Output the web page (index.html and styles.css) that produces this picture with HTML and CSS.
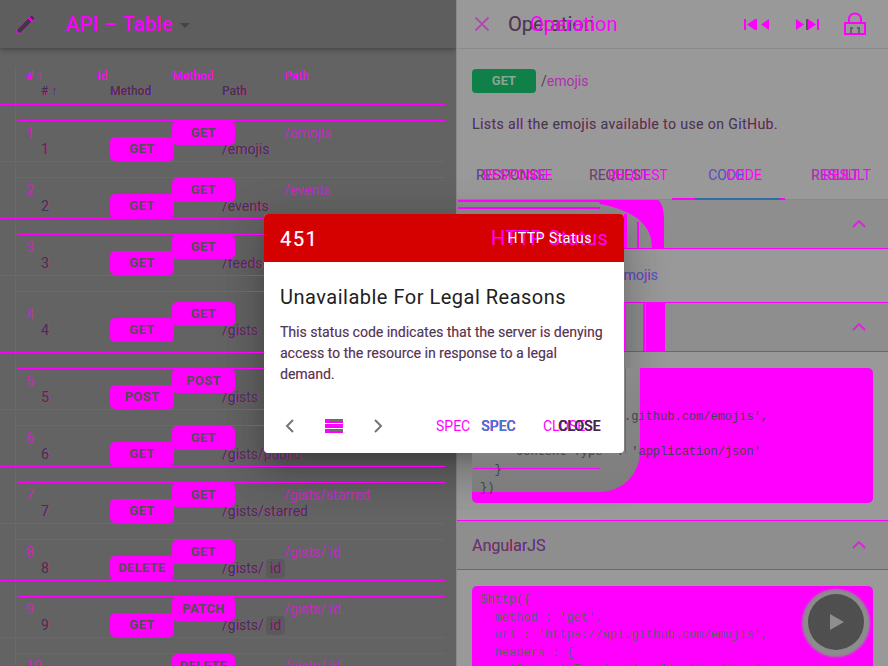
FILE: index.html
```html
<!DOCTYPE html>
<html lang="en">
<head>
    <meta charset="UTF-8">
    <meta name="viewport" content="width=device-width, initial-scale=1.0">
    <title>API Table</title>
    <link rel="stylesheet" href="styles.css">
</head>
<body>
    <div class="app">
        <!-- Left side: list of operations -->
        <div class="list-panel">
            <div class="list-head">
                <svg class="edit-icon" width="24" height="24" viewBox="0 0 24 24"><path d="M3 17.25V21h3.75L17.81 9.94l-3.75-3.75L3 17.25zM20.71 7.04c.39-.39.39-1.02 0-1.41l-2.34-2.34c-.39-.39-1.02-.39-1.41 0l-1.83 1.83 3.75 3.75 1.83-1.83z"/></svg>
                <span class="list-title">API – Table</span>
                <span class="caret"></span>
            </div>

            <div class="tables">
                <div class="real-table">
                    <div class="real-row real-header"><span>#&nbsp;↑</span><span>Method</span><span>Path</span></div>
                    <div class="real-row"><span>1</span><span class="pill">GET</span><span>/emojis</span></div>
                    <div class="real-row"><span>2</span><span class="pill">GET</span><span>/events</span></div>
                    <div class="real-row"><span>3</span><span class="pill">GET</span><span>/feeds</span></div>
                    <div class="real-row tall"><span>4</span><span class="pill">GET</span><span>/gists</span></div>
                    <div class="real-row"><span>5</span><span class="pill">POST</span><span>/gists</span></div>
                    <div class="real-row"><span>6</span><span class="pill">GET</span><span>/gists/public</span></div>
                    <div class="real-row"><span>7</span><span class="pill">GET</span><span>/gists/starred</span></div>
                    <div class="real-row"><span>8</span><span class="pill">DELETE</span><span>/gists/<i class="chip">id</i></span></div>
                    <div class="real-row"><span>9</span><span class="pill">GET</span><span>/gists/<i class="chip">id</i></span></div>
                </div>

                <div class="ghost-table">
                    <div class="ghost-row ghost-header"><span>#&nbsp;↑</span><span>Id</span><span>Method</span><span>Path</span></div>
                    <div class="ghost-row"><span>1</span><span></span><span class="pill">GET</span><span>/emojis</span></div>
                    <div class="ghost-row"><span>2</span><span></span><span class="pill">GET</span><span>/events</span></div>
                    <div class="ghost-row"><span>3</span><span></span><span class="pill">GET</span><span>/feeds</span></div>
                    <div class="ghost-row tall"><span>4</span><span></span><span class="pill">GET</span><span>/gists</span></div>
                    <div class="ghost-row"><span>5</span><span></span><span class="pill">POST</span><span>/gists</span></div>
                    <div class="ghost-row"><span>6</span><span></span><span class="pill">GET</span><span>/gists/public</span></div>
                    <div class="ghost-row"><span>7</span><span></span><span class="pill">GET</span><span>/gists/starred</span></div>
                    <div class="ghost-row"><span>8</span><span></span><span class="pill">GET</span><span>/gists/ id</span></div>
                    <div class="ghost-row"><span>9</span><span></span><span class="pill">PATCH</span><span>/gists/ id</span></div>
                    <div class="ghost-row"><span>10</span><span></span><span class="pill">DELETE</span><span>/gists/ id</span></div>
                </div>
            </div>
        </div>

        <!-- Right side: operation details -->
        <div class="detail-panel">
            <div class="detail-head">
                <svg class="close-icon" width="24" height="24" viewBox="0 0 24 24"><path d="M5.5 5.5l13 13M18.5 5.5l-13 13"/></svg>
                <span class="detail-title">Operation</span>
                <span class="detail-title-ghost">Operation</span>
                <div class="head-icons">
                    <svg width="28" height="24" viewBox="0 0 28 24"><path class="fill-m" d="M1 7h2v11H1zM12 7h2v11h-2zM12 7L4 12.500 12 18zM26 7v11l-8-5.500z"/></svg>
                    <svg width="24" height="24" viewBox="0 0 24 24"><path class="fill-m" d="M1 7l8 5.500-8 5.500zM13 7l8 5.500-8 5.500zM22 7h2v11h-2z"/><path class="fill-d" d="M11 7h2v11h-2z"/></svg>
                    <svg width="24" height="24" viewBox="0 0 24 24"><path class="lock" d="M2 11h20v11H2zM6 11V7c0-3 2.500-5.500 6-5.500s6 2.500 6 5.500v4"/><path class="lock-bar" d="M8 22v-6h2M14 16h2v6"/></svg>
                </div>
            </div>

            <div class="operation">
                <div class="op-line">
                    <span class="op-method">GET</span>
                    <span class="op-path">/<b>emojis</b></span>
                </div>
                <p class="op-desc">Lists all the emojis available to use on GitHub.</p>
            </div>

            <div class="tabs">
                <div class="tab-row">
                    <span>RESPONSE</span><span>REQUEST</span><span class="active">CODE</span><span class="result">RESULT</span>
                </div>
                <div class="tab-row tab-ghost">
                    <span>RESPONSE</span><span>REQUEST</span><span>CODE</span><span>RESULT</span>
                </div>
                <div class="tab-line"></div>
            </div>

            <div class="section-head">
                <span>URL</span>
                <svg class="chevron" width="14" height="8" viewBox="0 0 14 8"><path d="M1 7l6-6 6 6"/></svg>
            </div>
            <div class="section-body url-body">
                <a class="url-link">https://api.github.com/emojis</a>
            </div>
            <div class="section-head">
                <span>jQuery</span>
                <svg class="chevron" width="14" height="8" viewBox="0 0 14 8"><path d="M1 7l6-6 6 6"/></svg>
            </div>
            <div class="section-body">
                <div class="code first-code">
                    <div class="code-hole"></div>
                    <div class="code-rule"></div>
<pre>$.ajax({
  method : 'get',
  url : 'https://api.github.com/emojis',
  headers : {
    'Content-Type' : 'application/json'
  }
})</pre>
                </div>
            </div>
            <div class="section-head">
                <span class="section-name">AngularJS</span>
                <svg class="chevron" width="14" height="8" viewBox="0 0 14 8"><path d="M1 7l6-6 6 6"/></svg>
            </div>
            <div class="section-body">
                <div class="code">
<pre>$http({
  method : 'get',
  url : 'https://api.github.com/emojis',
  headers : {
    'Content-Type' : 'application/json'
  }
})</pre>
                </div>
            </div>

            <!-- Stray patches next to the dialog, given in page coordinates -->
            <svg class="patches" width="431" height="666" viewBox="457 0 431 666">
                <rect x="458" y="200" width="200" height="2"/>
                <rect x="458" y="207" width="142" height="2"/>
                <path d="M598 200H658C662 203 664 210 664 220V248H652C652 228 640 212 600 204Z"/>
                <rect x="624" y="214" width="3" height="34"/>
                <rect x="637" y="222" width="2" height="26"/>
                <rect x="624" y="302" width="2" height="49"/>
                <rect x="643" y="302" width="2" height="49"/>
                <rect x="646" y="302" width="19" height="49"/>
                <rect x="625" y="368" width="1" height="85"/>
                <rect x="643" y="368" width="2" height="60"/>
            </svg>

            <button class="play">
                <svg width="14" height="16" viewBox="0 0 14 16"><path d="M0 0l14 8-14 8z"/></svg>
            </button>
        </div>

        <div class="dialog-shadow"></div>
        <div class="dialog">
            <div class="dialog-head">
                <span class="dialog-code">451</span>
                <span class="dialog-kind-ghost">HTTP Status</span>
                <span class="dialog-kind">HTTP Status</span>
            </div>
            <div class="dialog-body">
                <h2>Unavailable For Legal Reasons</h2>
                <p>This status code indicates that the server is denying access to the resource in response to a legal demand.</p>
            </div>
            <div class="dialog-actions">
                <svg class="nav" width="10" height="14" viewBox="0 0 10 14"><path d="M8 1L2 7l6 6"/></svg>
                <svg class="list-icon" width="18" height="15" viewBox="0 0 18 15"><path class="fill-m" d="M0 0h18v4H0zM0 5h18v4H0zM0 10h18v4H0z"/><path class="fill-g" d="M5 1h13v1H5zM5 6h13v1H5zM5 11h13v1H5z"/></svg>
                <svg class="nav" width="10" height="14" viewBox="0 0 10 14"><path d="M2 1l6 6-6 6"/></svg>
                <span class="action-ghost spec-ghost">SPEC</span>
                <span class="action spec">SPEC</span>
                <span class="action-ghost close-ghost">CLOSE</span>
                <span class="action close">CLOSE</span>
            </div>
        </div>
    </div>
</body>
</html>
```

FILE: styles.css
```css
* {
    box-sizing: border-box;
}

body {
    margin: 0;
    font-family: Roboto, "Liberation Sans", sans-serif;
    background: #999;
}

.app {
    position: relative;
    display: flex;
    width: 888px;
    height: 666px;
    overflow: hidden;
}

/* Left panel */

.list-panel {
    width: 456px;
    flex-shrink: 0;
    background: #636363;
}

.list-head {
    position: relative;
    display: flex;
    align-items: center;
    height: 48px;
    padding-left: 14px;
    background: #5e5e5e;
    box-shadow: 0 2px 5px rgba(0, 0, 0, 0.3);
}

.edit-icon {
    fill: #3c3c3c;
    stroke: #f0f;
    stroke-width: 1;
}

.list-title {
    margin-left: 28px;
    font-size: 20px;
    font-weight: 500;
    letter-spacing: 0.4px;
    color: #f0f;
    text-shadow: 1px 0 #555;
}

.caret {
    margin-left: 7px;
    margin-top: 2px;
    border-left: 5px solid transparent;
    border-right: 5px solid transparent;
    border-top: 5px solid #444;
}

.tables {
    position: relative;
    z-index: 4;
}

.pill {
    display: block;
    height: 24px;
    line-height: 24px;
    border-radius: 5px;
    background: #f0f;
    color: #505050;
    font-size: 13px;
    font-weight: 700;
    text-align: center;
    letter-spacing: 0.3px;
}

.real-row {
    display: grid;
    grid-template-columns: 69px 112px 1fr;
    align-items: end;
    height: 57px;
    margin-right: 11px;
    padding-left: 41px;
    border-bottom: 1px solid #f0f;
    font-size: 14px;
    line-height: 24px;
    color: #3a3a3a;
    text-shadow: 0.5px 0 rgba(255, 0, 255, 0.7);
}

.real-row .pill {
    width: 64px;
    text-shadow: none;
}

.real-header {
    font-size: 12px;
    font-weight: 500;
    padding-bottom: 1px;
}

.real-row.tall {
    height: 77px;
    padding-bottom: 10px;
}

.chip {
    display: inline-block;
    height: 19px;
    line-height: 19px;
    margin-left: 2px;
    padding: 0 4px;
    border-radius: 4px;
    background: #5a5a5a;
    font-style: normal;
}

.ghost-table {
    position: absolute;
    left: 15px;
    right: 11px;
    top: 19px;
    height: 600px;
    padding-left: 1px;
    border-left: 1px solid #f0f;
}

.ghost-row {
    display: grid;
    grid-template-columns: 71px 75px 112px 1fr;
    align-items: start;
    height: 57px;
    padding-left: 9px;
    border-bottom: 1px solid #f0f;
    font-size: 14px;
    line-height: 24px;
    color: rgba(255, 0, 255, 0.65);
}

.ghost-row .pill {
    width: 63px;
}

.ghost-header {
    height: 54px;
    font-size: 12px;
    font-weight: 500;
    line-height: 18px;
    color: #f0f;
}

.ghost-row.tall {
    height: 77px;
    padding-top: 10px;
}

/* Right panel */

.detail-panel {
    position: relative;
    flex: 1;
    border-left: 1px solid #888;
    background: #999;
}

.detail-head {
    position: relative;
    display: flex;
    align-items: center;
    height: 49px;
    padding-left: 13px;
    border-bottom: 1px solid #8a8a8a;
}

.close-icon {
    fill: none;
    stroke: #b04ab0;
    stroke-width: 1.800;
}

.detail-title {
    margin-left: 14px;
    font-size: 20px;
    color: #3f3f3f;
    text-shadow: 0.5px 0 rgba(255, 0, 255, 0.5);
}

.detail-title-ghost {
    position: absolute;
    left: 73px;
    top: 12px;
    font-size: 20px;
    color: #f0f;
    letter-spacing: 0.1px;
}

.head-icons {
    position: absolute;
    top: 12px;
    left: 286px;
    display: flex;
    gap: 24px;
}

.fill-m {
    fill: #f0f;
}

.fill-d {
    fill: #555;
}

.fill-g {
    fill: #757575;
}

.lock,
.lock-bar {
    fill: none;
    stroke: #f0f;
    stroke-width: 2;
}

.lock-bar {
    stroke: #666;
}

.operation {
    padding: 20px 15px 0;
    height: 101px;
}

.op-line {
    display: flex;
    align-items: center;
}

.op-method {
    width: 64px;
    height: 24px;
    line-height: 24px;
    border-radius: 4px;
    background: #0f8048;
    color: #8da595;
    font-size: 13px;
    font-weight: 700;
    text-align: center;
}

.op-path {
    margin-left: 5px;
    font-size: 14px;
    color: #444;
}

.op-path b {
    font-weight: 400;
    color: #b02fb0;
}

.op-desc {
    margin: 20px 0 0;
    font-size: 14px;
    line-height: 22px;
    letter-spacing: 0.42px;
    color: #3f3f3f;
    text-shadow: 0.4px 0 rgba(255, 0, 255, 0.5);
}

.tabs {
    position: relative;
    height: 50px;
    border-bottom: 1px solid #888;
}

.tab-row {
    display: grid;
    grid-template-columns: 113px 119px 103px 1fr;
    padding: 16px 0 0 19px;
    font-size: 14px;
    line-height: 18px;
    color: #555;
    text-shadow: 0.4px 0 rgba(255, 0, 255, 0.6);
}

.tab-row .active {
    color: #3a6fa5;
}

.tab-row .result {
    color: #a03ca0;
}

.tab-ghost {
    position: absolute;
    left: 0;
    top: 0;
    grid-template-columns: 125px 118px 97px 1fr;
    padding-left: 26px;
    width: 100%;
    color: #f0f;
    text-shadow: none;
}

.tab-line {
    position: absolute;
    left: 215px;
    bottom: -1px;
    width: 113px;
    height: 2px;
    background: linear-gradient(to right, #f0f 23px, #2f6ca3 23px, #2f6ca3 108px, #f0f 108px);
}

.section-head {
    display: flex;
    justify-content: space-between;
    align-items: center;
    height: 49px;
    padding: 0 22px 0 15px;
    border-bottom: 1px solid #f0f;
    background: #8e8e8e;
    font-size: 16px;
    color: #3f3f3f;
}

.section-name {
    color: #4a4a4a;
    text-shadow: 0.5px 0 rgba(255, 0, 255, 0.8);
}

.chevron {
    fill: none;
    stroke: #e01fe0;
    stroke-width: 1.800;
}

.section-body {
    padding: 16px 15px 17px;
    border-bottom: 1px solid #f0f;
}

.url-body {
    height: 54px;
    font-size: 14px;
    line-height: 21px;
}

.url-link {
    color: #3a6fa5;
    text-shadow: 0.5px 0 rgba(255, 0, 255, 0.8);
}

.code {
    position: relative;
    z-index: 4;
    height: 135px;
    padding: 6px 8px;
    border-radius: 5px;
    background: #f0f;
}

.code pre {
    position: relative;
    margin: 0;
    font-family: "Liberation Mono", monospace;
    font-size: 12px;
    line-height: 17.600px;
    color: #5f5f5f;
}

.first-code pre {
    color: #444;
}

.code-hole {
    position: absolute;
    left: 0;
    top: 0;
    width: 168px;
    height: 124px;
    border-radius: 5px 0 40px 0;
    background: linear-gradient(to bottom, #8a8a8a, #7d7d7d);
}

.code-rule {
    position: absolute;
    left: 1px;
    top: 100px;
    width: 127px;
    height: 1px;
    background: #f0f;
}

.patches {
    position: absolute;
    left: 0;
    top: 0;
    z-index: 4;
    fill: #f0f;
    pointer-events: none;
}

.play {
    position: absolute;
    right: 24px;
    bottom: 16px;
    z-index: 4;
    display: flex;
    align-items: center;
    justify-content: center;
    width: 56px;
    height: 56px;
    padding: 0 0 0 2px;
    border: 0;
    border-radius: 50%;
    background: #4f4f4f;
    box-shadow: 0 1px 2px 6px #8c8c8c;
}

.play svg {
    fill: #8e8e8e;
}

/* Dialog */

.dialog-shadow,
.dialog {
    position: absolute;
    left: 264px;
    top: 214px;
    width: 360px;
    height: 239px;
    border-radius: 4px;
}

.dialog-shadow {
    z-index: 3;
    box-shadow: 0 11px 15px -7px rgba(0, 0, 0, 0.2), 0 24px 38px 3px rgba(0, 0, 0, 0.14), 0 9px 46px 8px rgba(0, 0, 0, 0.12);
}

.dialog {
    z-index: 5;
    display: flex;
    flex-direction: column;
    overflow: hidden;
    background: #fff;
}

.dialog-head {
    position: relative;
    display: flex;
    justify-content: space-between;
    align-items: center;
    flex-shrink: 0;
    height: 48px;
    padding: 0 32px 0 16px;
    background: #d50000;
    color: #fff;
}

.dialog-code {
    padding-top: 2px;
    font-size: 20px;
    letter-spacing: 1.500px;
    text-shadow: 0.5px 0 #f6a;
}

.dialog-kind {
    position: relative;
    font-size: 14px;
    letter-spacing: 0.5px;
}

.dialog-kind-ghost {
    position: absolute;
    left: 227px;
    top: 12px;
    font-size: 20px;
    letter-spacing: 0.4px;
    color: #f0f;
}

.dialog-body {
    padding: 0 16px;
}

.dialog-body h2 {
    margin: 23px 0 0;
    font-size: 20px;
    font-weight: 400;
    line-height: 24px;
    letter-spacing: 0.5px;
    color: #212121;
}

.dialog-body p {
    margin: 13px 0 0;
    font-size: 14px;
    line-height: 21px;
    color: #444;
    text-shadow: 0.4px 0 rgba(255, 0, 255, 0.5);
}

.dialog-actions {
    position: relative;
    flex: 1;
    display: flex;
    align-items: center;
    padding: 14px 0 0 21px;
    font-size: 14px;
}

.nav {
    fill: none;
    stroke: #757575;
    stroke-width: 2;
}

.list-icon {
    margin: 0 30px 0 30px;
}

.action,
.action-ghost {
    position: absolute;
    top: 32px;
    line-height: 18px;
    white-space: nowrap;
}

.action {
    font-weight: 500;
}

.action-ghost {
    color: #f0f;
}

.spec-ghost {
    left: 172px;
}

.spec {
    left: 217px;
    color: #3f7fc8;
    text-shadow: 0.5px 0 #f0f;
}

.close-ghost {
    left: 279px;
}

.close {
    left: 294px;
    color: #333;
    text-shadow: 0.5px 0 #f0f;
}
```
